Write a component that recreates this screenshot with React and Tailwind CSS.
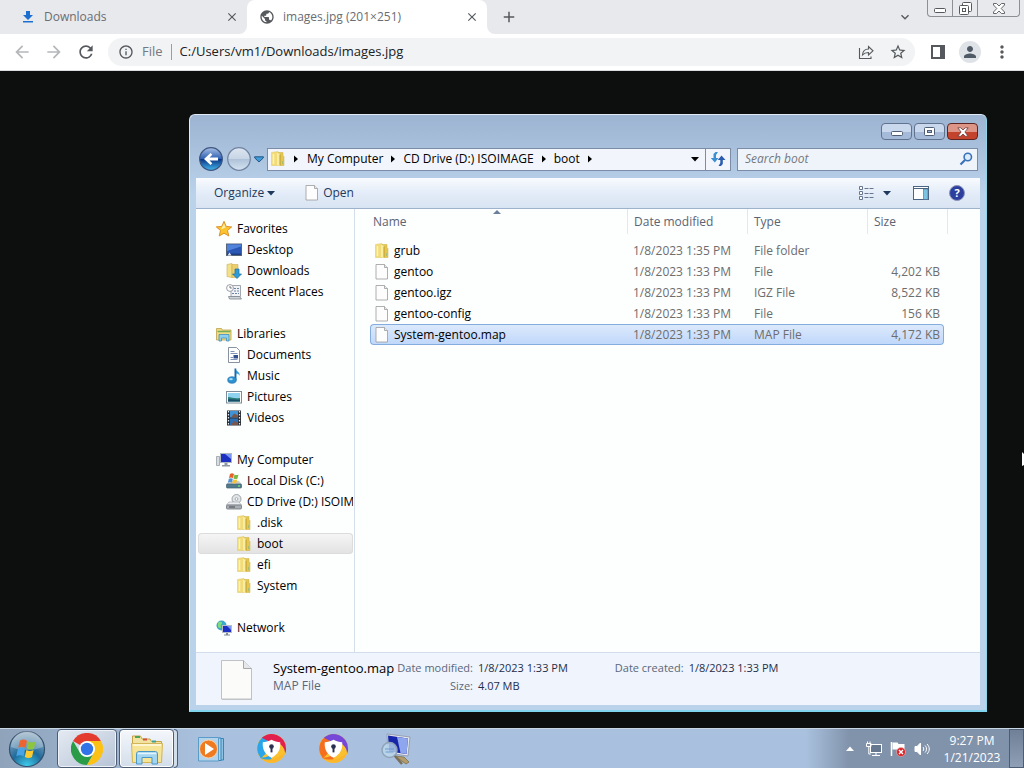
import React, { useState } from 'react'
import clsx from 'clsx'
import {
  MdAdd,
  MdArrowBack,
  MdArrowForward,
  MdClose,
  MdExpandMore,
  MdInfoOutline,
  MdMoreVert,
  MdPerson,
  MdPublic,
  MdRefresh,
  MdStarBorder
} from 'react-icons/md'

/* ---------- Small icons ---------- */

const Icon = ({ children, className = 'size-4', box = '0 0 16 16' }) => (
  <svg viewBox={box} className={clsx('shrink-0', className)} aria-hidden="true">
    {children}
  </svg>
)

const FolderIcon = () => (
  <Icon>
    <path d="M1.500 1.500L8 .5v14H1.500z" fill="#f2dc78" stroke="#e0c565" strokeWidth=".5" />
    <path d="M8 1.500h5v3l1 1v9H8z" fill="#e4c751" stroke="#cfae42" strokeWidth=".5" />
    <path d="M7 1.500l3 1.500v12.500L7 14z" fill="#f9eda4" />
    <path d="M10 3.500v11" stroke="#bd992f" />
    <path d="M3.500 3v10" stroke="#fcf3bd" strokeWidth="1.500" />
    <path d="M12.500 10v3" stroke="#a9bd6a" />
  </Icon>
)

const FileIcon = ({ className = 'size-4' }) => (
  <Icon className={className}>
    <path d="M2 .5h8.500l3 3v11.500H2z" fill="#fdfdfd" stroke="#9a9a9a" strokeWidth=".8" />
    <path d="M10.500.500v3h3" fill="#ececec" stroke="#9a9a9a" strokeWidth=".8" />
  </Icon>
)

const StarIcon = () => (
  <Icon>
    <path
      d="M8 .3l2.200 5.100 5.500.5-4.200 3.600 1.300 5.500L8 12.200 3.200 15l1.300-5.500L.3 5.900l5.500-.5z"
      fill="#fbc42f"
      stroke="#d98a1e"
      strokeWidth=".9"
    />
    <path d="M8 2.500l1.500 4L5 8.500z" fill="#fff0a8" />
  </Icon>
)

const DesktopIcon = () => (
  <Icon>
    <rect x=".5" y="2" width="15" height="11.500" fill="#2a56b4" stroke="#56657a" />
    <path d="M1 2.500h14v2L1 9z" fill="#4f83dc" />
    <path d="M1 11.500h14V13H1z" fill="#1c3d80" />
    <path d="M1.500 13.500l2-3 2 3z" fill="#dfe8f4" />
  </Icon>
)

const DownloadsIcon = () => (
  <Icon>
    <path d="M1 1.500l5-1v14l-5-1z" fill="#f3e08a" stroke="#cfae4c" strokeWidth=".6" />
    <path d="M6 1.500h6v13H6z" fill="#ecd070" stroke="#cfae4c" strokeWidth=".6" />
    <path d="M9 6h4v5h2.500L11 15.500 6.500 11H9z" fill="#2e9bd6" stroke="#1b6da3" strokeWidth=".7" />
  </Icon>
)

const RecentIcon = () => (
  <Icon>
    <path d="M5 1.500h9.500v11H5z" fill="#f0f2f5" stroke="#8c939c" strokeWidth=".8" />
    <path d="M2.500 12.500h11l2 2.500h-12z" fill="#cfd4da" stroke="#7e858e" strokeWidth=".8" />
    <path d="M8 4.500h5M8 7h5M6 9.500h7" stroke="#6f85a5" strokeWidth="1.200" strokeDasharray="2 1" />
    <circle cx="4" cy="4" r="3.400" fill="#fff" stroke="#8c939c" strokeWidth=".9" />
    <path d="M4 2v2h1.800" fill="none" stroke="#555" strokeWidth=".8" />
  </Icon>
)

const LibrariesIcon = () => (
  <Icon>
    <path d="M.5 2.500h5l1 1.500h8.500v10H.5z" fill="#f0dc84" stroke="#bfa14a" strokeWidth=".8" />
    <path d="M1.500 5.500h13" stroke="#6fae5a" strokeWidth="1.500" />
    <path d="M3 8.500h10V15h-2.500v-3h-5v3H3z" fill="#8fd0ef" stroke="#3f8fbd" strokeWidth=".8" />
  </Icon>
)

const DocumentsIcon = () => (
  <Icon>
    <path d="M2.500.500h8l3 3v12h-11z" fill="#fff" stroke="#7c8794" strokeWidth=".9" />
    <path d="M4.500 4.500h4M4.500 6.500h7M4.500 12.500h7M4.500 10.500h2.500" stroke="#7f94b8" />
    <path d="M7.500 8h4.500v3.500H7.500z" fill="#33518c" />
  </Icon>
)

const MusicIcon = () => (
  <Icon>
    <path d="M9 .5c1 3 5.500 3 4.500 7.500-.5-2-2-2.500-3.200-2.600V12z" fill="#3a9edb" />
    <path d="M8.500.500h1.800v12H8.500z" fill="#1d6aa8" />
    <ellipse cx="6" cy="12" rx="4.300" ry="3.300" fill="#2d92d2" stroke="#1d6aa8" strokeWidth=".6" />
    <ellipse cx="5" cy="11.200" rx="1.800" ry="1.100" fill="#a6dcf7" />
  </Icon>
)

const PicturesIcon = () => (
  <Icon>
    <rect x=".5" y="2.500" width="15" height="11.500" fill="#fff" stroke="#7f8c99" />
    <rect x="2" y="4" width="12" height="8.500" fill="#8fd3ef" />
    <path d="M2 8c4 0 6 2 12 1v3.500H2z" fill="#2b7f7d" />
    <path d="M2 10.500c4-1 8 1 12 0v2H2z" fill="#184e68" />
  </Icon>
)

const VideosIcon = () => (
  <Icon>
    <rect x="1" y=".5" width="14" height="15" fill="#2a2f36" />
    <rect x="4" y="1" width="8" height="6.500" fill="#3f93d8" />
    <rect x="4" y="8.500" width="8" height="6.500" fill="#2c6fb5" />
    <path d="M5 7.500l3-4 4 2v2zM5 15l3-4 4 2v2z" fill="#7d5548" />
    <path d="M2.500 1v14M13.500 1v14" stroke="#e8edf2" strokeWidth="1.200" strokeDasharray="1.500 1.500" />
  </Icon>
)

const ComputerIcon = () => (
  <Icon>
    <path d="M.5 4.500h3v9h-3z" fill="#d9dde2" stroke="#8a929c" strokeWidth=".7" />
    <rect x="4.500" y="1.500" width="11" height="9" fill="#1b2fc0" stroke="#aeb6c2" />
    <path d="M9 2h6v5z" fill="#7d96f0" />
    <path d="M8.500 11h3v2h-3zM6 13h8v1.500H6z" fill="#8d97a5" />
  </Icon>
)

const LocalDiskIcon = () => (
  <Icon>
    <path d="M3 8h10l2.500 3H.5z" fill="#c8ced6" />
    <rect x=".5" y="11" width="15" height="4" rx=".8" fill="#507a8e" stroke="#43606f" strokeWidth=".7" />
    <circle cx="13" cy="13" r=".9" fill="#6bea6b" />
    <path d="M4 1c1.500-1 2.500-1 4 0L7 5c-1.500-.8-2.500-.8-4 0z" fill="#e8622c" />
    <path d="M8.500 1.500c1.500.8 2.500.8 4 0l-1 4c-1.500.8-2.500.8-4 0z" fill="#7cb944" />
    <path d="M2.800 5.800c1.500-.8 2.500-.8 4 0L6 9.500c-1.500-.8-2.500-.8-4 0z" fill="#4f93d8" />
    <path d="M7.300 6.200c1.500.8 2.500.8 4 0l-1 3.700c-1.500.8-2.500.8-4 0z" fill="#f7c430" />
  </Icon>
)

const CdDriveIcon = () => (
  <Icon>
    <circle cx="10.500" cy="5" r="4.500" fill="#e2e5e9" stroke="#8b9096" strokeWidth=".8" />
    <circle cx="10.500" cy="5" r="1.400" fill="#fff" stroke="#8b9096" strokeWidth=".7" />
    <path d="M3 8h10l2.500 3H.5z" fill="#eceef1" stroke="#9aa0a8" strokeWidth=".6" />
    <rect x=".5" y="11" width="15" height="4" rx="1" fill="#a9aeb5" stroke="#70757c" strokeWidth=".8" />
    <path d="M3 13h6" stroke="#44484d" />
  </Icon>
)

const NetworkIcon = () => (
  <Icon>
    <circle cx="5.500" cy="5.500" r="5" fill="#3ba7c9" />
    <path d="M2 3c2-2 4-1 4 0s-2 2-1 4-2 1-3 0z" fill="#7fdc7a" />
    <rect x="6.500" y="5.500" width="9" height="7" fill="#1c2fc4" stroke="#b4bcc8" />
    <path d="M11 6h4v4z" fill="#7d96f0" />
    <path d="M10 13h2v1.500h-2zM8 14.500h6v1H8z" fill="#7f8997" />
  </Icon>
)

const Caret = ({ dir = 'right', className = 'text-black' }) => (
  <svg
    viewBox="0 0 8 8"
    className={clsx('size-2 shrink-0', className)}
    fill="currentColor"
    aria-hidden="true"
  >
    {dir === 'right' ? <path d="M2 .5L6 4 2 7.500z" /> : <path d="M0 2h8L4 6.500z" />}
  </svg>
)

/* ---------- Browser ---------- */

const DownloadArrow = () => (
  <Icon className="size-4">
    <path d="M6 2h4v4h3L8 11 3 6h3z" fill="#1a6fd0" />
    <path d="M3 12h10v1.500H3z" fill="#1a6fd0" />
  </Icon>
)

const BrowserTab = ({ title, icon, active }) => (
  <div
    className={clsx(
      'relative flex items-center pr-2 text-xs text-[#6a6d71]',
      active ? 'w-60 rounded-t-lg bg-white pl-3' : 'w-[247px] pl-5'
    )}
  >
    {active && (
      <>
        <svg viewBox="0 0 8 8" className="absolute bottom-0 -left-2 size-2" aria-hidden="true">
          <path d="M8 0v8H0a8 8 0 0 0 8-8z" fill="#fff" />
        </svg>
        <svg viewBox="0 0 8 8" className="absolute -right-2 bottom-0 size-2" aria-hidden="true">
          <path d="M0 0v8h8a8 8 0 0 1-8-8z" fill="#fff" />
        </svg>
      </>
    )}
    {icon}
    <span className="ml-2 flex-1 truncate">{title}</span>
    <button aria-label={`Close ${title}`} className="text-[#55585c]">
      <MdClose className="size-[14px]" />
    </button>
  </div>
)

const BrowserWindowButtons = () => (
  <div className="mr-1 flex h-[17px] rounded-b border border-t-0 border-[#8c8f94] text-[#55585c]">
    <button aria-label="Minimize browser" className="flex w-[25px] items-end justify-center border-r border-[#8c8f94] pb-[3px]">
      <svg viewBox="0 0 12 5" className="h-[5px] w-3" fill="#fff" stroke="currentColor">
        <rect x=".5" y=".5" width="11" height="4" rx="1" />
      </svg>
    </button>
    <button aria-label="Restore browser" className="flex w-[25px] items-center justify-center border-r border-[#8c8f94]">
      <svg viewBox="0 0 13 13" className="size-[13px]" fill="#fff" stroke="currentColor">
        <rect x="3.500" y=".5" width="9" height="9" rx="1" />
        <rect x=".5" y="3.500" width="9" height="9" rx="1" />
        <rect x="3.500" y="6.500" width="3" height="3" />
      </svg>
    </button>
    <button aria-label="Close browser" className="flex w-[41px] items-center justify-center">
      <svg viewBox="0 0 12 11" className="h-[11px] w-3" fill="#fff" stroke="currentColor" strokeWidth=".9">
        <path d="M.5.500h3L6 3 8.500.500h3v1.500L8.200 5.500l3.300 3.500v1.500h-3L6 8l-2.500 2.500h-3V9l3.300-3.500L.5 2z" />
      </svg>
    </button>
  </div>
)

const BrowserHeader = () => {
  const [url, setUrl] = useState('C:/Users/vm1/Downloads/images.jpg')

  return (
    <header className="border-b border-[#dadce0] bg-white">
      <div className="flex h-[34px] bg-[#e8e9ed]">
        <BrowserTab title="Downloads" icon={<DownloadArrow />} />
        <BrowserTab
          title="images.jpg (201×251)"
          icon={<MdPublic className="size-4 text-[#55585c]" />}
          active
        />
        <button aria-label="New tab" className="ml-[13px] text-[#55585c]">
          <MdAdd className="size-[18px]" />
        </button>
        <button aria-label="Search tabs" className="mr-[14px] ml-auto text-[#55585c]">
          <MdExpandMore className="size-4" />
        </button>
        <BrowserWindowButtons />
      </div>

      <div className="flex h-9 items-center px-3">
        <button aria-label="Back" className="mr-3 text-[#b5b7ba]">
          <MdArrowBack className="size-5" />
        </button>
        <button aria-label="Forward" className="mr-3 text-[#b5b7ba]">
          <MdArrowForward className="size-5" />
        </button>
        <button aria-label="Reload" className="mr-3 text-[#55585c]">
          <MdRefresh className="size-5" />
        </button>

        <div className="flex h-7 flex-1 items-center rounded-full bg-[#f1f3f4] pr-2 pl-[10px] text-[13px]">
          <MdInfoOutline className="size-4 text-[#55585c]" />
          <span className="ml-2 text-[#75787c]">File</span>
          <span className="mx-2 h-4 w-px bg-[#9a9da1]" />
          <input
            aria-label="Address"
            value={url}
            onChange={(e) => setUrl(e.target.value)}
            className="min-w-0 flex-1 bg-transparent text-[#202124] outline-none"
          />
          <button aria-label="Share" className="mr-[15px]">
            <svg viewBox="0 0 16 16" className="size-4" fill="none" stroke="#55585c" strokeWidth="1.100">
              <path d="M1.500 4v10.500H13V12.500" />
              <path d="M4.500 11c.3-4 2.500-6 6-6V2.500L15 6.800 10.500 11V8.500c-2.800 0-4.500.8-6 2.500z" />
            </svg>
          </button>
          <button aria-label="Bookmark" className="text-[#55585c]">
            <MdStarBorder className="size-[18px]" />
          </button>
        </div>

        <button aria-label="Side panel" className="ml-4">
          <svg viewBox="0 0 14 14" className="size-[14px]">
            <path d="M0 0h14v14H0z" fill="#55585c" />
            <path d="M2 2h7v10H2z" fill="#fff" />
          </svg>
        </button>
        <button
          aria-label="Profile"
          className="ml-[14px] flex size-[22px] items-center justify-center rounded-full bg-[#dfe3e8] text-[#4f5a66]"
        >
          <MdPerson className="size-[18px]" />
        </button>
        <button aria-label="Menu" className="ml-[11px] text-[#55585c]">
          <MdMoreVert className="size-5" />
        </button>
      </div>
    </header>
  )
}

/* ---------- Explorer window ---------- */

const navGroups = [
  [
    { name: 'Favorites', icon: StarIcon, level: 0 },
    { name: 'Desktop', icon: DesktopIcon, level: 1 },
    { name: 'Downloads', icon: DownloadsIcon, level: 1 },
    { name: 'Recent Places', icon: RecentIcon, level: 1 }
  ],
  [
    { name: 'Libraries', icon: LibrariesIcon, level: 0 },
    { name: 'Documents', icon: DocumentsIcon, level: 1 },
    { name: 'Music', icon: MusicIcon, level: 1 },
    { name: 'Pictures', icon: PicturesIcon, level: 1 },
    { name: 'Videos', icon: VideosIcon, level: 1 }
  ],
  [
    { name: 'My Computer', icon: ComputerIcon, level: 0 },
    { name: 'Local Disk (C:)', icon: LocalDiskIcon, level: 1 },
    { name: 'CD Drive (D:) ISOIMAGE', icon: CdDriveIcon, level: 1 },
    { name: '.disk', icon: FolderIcon, level: 2 },
    { name: 'boot', icon: FolderIcon, level: 2 },
    { name: 'efi', icon: FolderIcon, level: 2 },
    { name: 'System', icon: FolderIcon, level: 2 }
  ],
  [{ name: 'Network', icon: NetworkIcon, level: 0 }]
]

const files = [
  { name: 'grub', date: '1/8/2023 1:35 PM', type: 'File folder', size: '', folder: true },
  { name: 'gentoo', date: '1/8/2023 1:33 PM', type: 'File', size: '4,202 KB' },
  { name: 'gentoo.igz', date: '1/8/2023 1:33 PM', type: 'IGZ File', size: '8,522 KB' },
  { name: 'gentoo-config', date: '1/8/2023 1:33 PM', type: 'File', size: '156 KB' },
  { name: 'System-gentoo.map', date: '1/8/2023 1:33 PM', type: 'MAP File', size: '4,172 KB' }
]

const indent = ['pl-[18px]', 'pl-7', 'pl-[38px]']

const CaptionButtons = () => (
  <div className="flex h-8 items-start justify-end gap-0.5 pt-2 pr-0.5">
    <button
      aria-label="Minimize"
      className="flex h-[17px] w-[31px] items-center justify-center rounded-sm border border-[#61728e] bg-linear-to-b from-[#c9d8ec] from-50% to-[#a5bad8] to-50% pt-1"
    >
      <svg viewBox="0 0 12 5" className="h-[5px] w-3" fill="#fff" stroke="#4f5d75">
        <rect x=".5" y=".5" width="11" height="4" rx="1" />
      </svg>
    </button>
    <button
      aria-label="Maximize"
      className="flex h-[17px] w-[31px] items-center justify-center rounded-sm border border-[#61728e] bg-linear-to-b from-[#c9d8ec] from-50% to-[#a5bad8] to-50%"
    >
      <svg viewBox="0 0 11 9" className="h-[9px] w-[11px]" fill="#fff" stroke="#4f5d75">
        <rect x=".5" y=".5" width="10" height="8" rx="1" />
        <rect x="3.500" y="3.500" width="4" height="2" fill="#a5bad8" />
      </svg>
    </button>
    <button
      aria-label="Close"
      className="flex h-[17px] w-[31px] items-center justify-center rounded-sm border border-[#5e2520] bg-linear-to-b from-[#dd9587] from-50% to-[#c4432c] to-50%"
    >
      <svg viewBox="0 0 12 10" className="h-[10px] w-3" fill="#fff" stroke="#6b3a38" strokeWidth=".8">
        <path d="M.8.800h3L6 3 8.200.800h3L7.900 5l3.300 4.200h-3L6 7 3.800 9.200h-3L4.100 5z" />
      </svg>
    </button>
  </div>
)

const NavigationRow = () => {
  const crumbs = ['My Computer', 'CD Drive (D:) ISOIMAGE', 'boot']

  return (
    <div className="mb-[7px] flex h-6 items-center pr-0.5 pl-[3px]">
      <button aria-label="Back" className="mr-1">
        <svg viewBox="0 0 24 24" className="size-6">
          <defs>
            <linearGradient id="backFill" x1="0" y1="0" x2="0" y2="1">
              <stop offset="0" stopColor="#a9bfe3" />
              <stop offset=".48" stopColor="#2f62b4" />
              <stop offset=".52" stopColor="#0b3685" />
              <stop offset="1" stopColor="#42b6ee" />
            </linearGradient>
          </defs>
          <circle cx="12" cy="12" r="11.300" fill="url(#backFill)" stroke="#3d5680" strokeWidth="1.200" />
          <path d="M5 12l6.500-6 1.800 1.800L10.500 10.500H19v3h-8.500l2.800 2.700L11.500 18z" fill="#fff" />
        </svg>
      </button>
      <button aria-label="Forward" className="mr-[3px]">
        <svg viewBox="0 0 24 24" className="size-6">
          <defs>
            <linearGradient id="forwardFill" x1="0" y1="0" x2="0" y2="1">
              <stop offset="0" stopColor="#dde6f1" />
              <stop offset=".48" stopColor="#c8d5e5" />
              <stop offset=".52" stopColor="#afc2d8" />
              <stop offset="1" stopColor="#d5e4f3" />
            </linearGradient>
          </defs>
          <circle cx="12" cy="12" r="11.300" fill="url(#forwardFill)" stroke="#6f83a0" strokeWidth="1.200" />
        </svg>
      </button>
      <button aria-label="Recent pages" className="mr-[3px]">
        <svg viewBox="0 0 10 7" className="h-[7px] w-[10px]">
          <path d="M.6.800h8.800v1L5 6 .6 1.800z" fill="#3f9ed8" stroke="#1d4a7c" strokeWidth=".9" />
        </svg>
      </button>

      <div className="flex h-[23px] flex-1 items-center border border-[#7a8ca6] bg-[#f2f6fc] pl-[2px] text-xs text-black">
        <FolderIcon />
        <Caret className="mr-[7px] ml-[6px] text-black" />
        {crumbs.map((crumb) => (
          <React.Fragment key={crumb}>
            <button className="whitespace-nowrap">{crumb}</button>
            <Caret className="mx-[6px] text-black" />
          </React.Fragment>
        ))}
        <button aria-label="Previous locations" className="mr-[6px] ml-auto">
          <Caret dir="down" />
        </button>
        <button
          aria-label="Refresh"
          className="flex h-full w-[25px] items-center justify-center border-l border-[#7a8ca6]"
        >
          <svg viewBox="0 0 16 16" className="size-4">
            <path d="M8 1H5.500L3.500 3v4H.8L4.800 11.500 8.500 7H6V4z" fill="#3b8fd0" />
            <path d="M8.500 15h2.500l1.800-2V9h2.700L11.500 4.500 7.800 9h2.500v3z" fill="#2a5cb0" />
          </svg>
        </button>
      </div>

      <div className="ml-[6px] flex h-[23px] w-[241px] items-center border border-[#7a8ca6] bg-[#eff4fb] pr-1 pl-[7px]">
        <input
          aria-label="Search boot"
          placeholder="Search boot"
          className="min-w-0 flex-1 bg-transparent text-xs italic outline-none placeholder:text-[#74777d]"
        />
        <svg viewBox="0 0 14 14" className="size-[14px]" fill="none" stroke="#3a72ba">
          <circle cx="8.800" cy="5" r="3.700" fill="#dcebfa" strokeWidth="1.600" />
          <path d="M6 8l-4.500 4.500" strokeWidth="2.200" />
        </svg>
      </div>
    </div>
  )
}

const CommandBar = () => (
  <div className="flex h-[31px] items-center border-b border-[#9fb2cd] bg-linear-to-b from-[#f9fbfe] via-[#e3ecf8] via-50% to-[#d9e4f3] pr-[15px] pl-[18px] text-xs text-[#1e395b]">
    <button className="flex items-center gap-[3px]">
      Organize
      <Caret dir="down" className="text-[#1e395b]" />
    </button>
    <button className="ml-[29px] flex items-center gap-[3px]">
      <FileIcon />
      Open
    </button>

    <button aria-label="Change view" className="ml-auto">
      <svg viewBox="0 0 16 14" className="h-[14px] w-4" fill="none" stroke="#66778f">
        <path d="M1.500.500h3v3h-3zM1.500 5.500h3v3h-3zM1.500 10.500h3v3h-3z" fill="#fff" />
        <path d="M6.500 2.500h9M6.500 7.500h9M6.500 11.500h9" strokeDasharray="4 1" />
      </svg>
    </button>
    <button aria-label="More view options" className="ml-[9px]">
      <Caret dir="down" className="text-[#1e395b]" />
    </button>
    <button aria-label="Preview pane" className="ml-[22px]">
      <svg viewBox="0 0 16 14" className="h-[14px] w-4">
        <rect x=".5" y=".5" width="15" height="13" fill="#fff" stroke="#4d6585" />
        <path d="M1 2.500h14" stroke="#4d6585" />
        <rect x="10.500" y="3" width="4.500" height="10.500" fill="#7cc3e2" stroke="#4d6585" strokeWidth=".6" />
      </svg>
    </button>
    <button
      aria-label="Help"
      className="ml-5 flex size-4 items-center justify-center rounded-full border border-[#8d96b8] bg-[#2c3f9e] text-[11px] font-bold text-white"
    >
      ?
    </button>
  </div>
)

const NavigationPane = ({ selected, onSelect }) => (
  <nav className="w-[159px] shrink-0 border-r border-[#d5dfec] pt-[9px] text-xs text-black">
    {navGroups.map((group) => (
      <ul key={group[0].name} className="mb-[21px] last:mb-0">
        {group.map(({ name, icon: ItemIcon, level }) => (
          <li key={name} className="pr-px pl-0.5">
            <button
              onClick={() => onSelect(name)}
              className={clsx(
                'flex h-[21px] w-full items-center gap-[5px] overflow-hidden text-left whitespace-nowrap',
                indent[level],
                selected === name &&
                  'rounded-sm bg-linear-to-b from-[#f6f6f6] to-[#e2e2e2] ring-1 ring-[#dcdcdc] ring-inset'
              )}
            >
              <ItemIcon />
              {name}
            </button>
          </li>
        ))}
      </ul>
    ))}
  </nav>
)

const headCell = 'h-[25px] border-r border-[#e3e8ee] pl-[6px] text-left font-normal'

const FileTable = ({ selected, onSelect }) => (
  <div className="flex-1 overflow-hidden pl-[15px]">
    <table className="w-[578px] table-fixed border-separate border-spacing-0 text-xs text-[#6d6d6d]">
      <colgroup>
        <col className="w-[258px]" />
        <col className="w-[120px]" />
        <col className="w-[120px]" />
        <col className="w-[76px]" />
        <col className="w-1" />
      </colgroup>
      <thead className="text-[#5a6473]">
        <tr>
          <th className="relative h-[25px] border-r border-[#e3e8ee] pl-[3px] text-left font-normal">
            Name
            <svg viewBox="0 0 8 4" className="absolute top-px left-[123px] h-1 w-2" aria-hidden="true">
              <path d="M0 4l4-4 4 4z" fill="#6a7f9c" />
            </svg>
          </th>
          <th className={headCell}>Date modified</th>
          <th className={headCell}>Type</th>
          <th className={headCell} colSpan={2}>
            Size
          </th>
        </tr>
        <tr aria-hidden="true">
          <td className="h-[6px]" colSpan={5} />
        </tr>
      </thead>
      <tbody>
        {files.map((file) => {
          const isSelected = selected === file.name
          const cell = clsx(
            'h-[21px] border-y',
            isSelected
              ? 'border-[#84acdd] bg-linear-to-b from-[#dce9fc] to-[#c0d8fb]'
              : 'border-transparent'
          )

          return (
            <tr key={file.name} onClick={() => onSelect(file.name)} aria-selected={isSelected}>
              <td className={clsx(cell, 'rounded-l-sm border-l pl-[3px] text-black')}>
                <span className="flex items-center gap-1">
                  {file.folder ? <FolderIcon /> : <FileIcon />}
                  {file.name}
                </span>
              </td>
              <td className={clsx(cell, 'pl-[5px] whitespace-nowrap')}>{file.date}</td>
              <td className={clsx(cell, 'pl-[6px]')}>{file.type}</td>
              <td className={clsx(cell, 'rounded-r-sm border-r pr-[3px] text-right whitespace-nowrap')}>
                {file.size}
              </td>
              <td />
            </tr>
          )
        })}
      </tbody>
    </table>
  </div>
)

const DetailsPane = () => (
  <footer className="flex border-t border-[#d3dcea] bg-[#f0f4fd] pt-[5px] pb-[5px] pl-[25px] text-xs leading-[18px] text-[#5a6779]">
    <svg viewBox="0 0 32 42" className="h-[42px] w-8 shrink-0" aria-hidden="true">
      <path d="M1 3h22l8 8v31H1z" fill="#bfc2c8" />
      <path d="M.5 2.500h22l8 8v30.500H.5z" fill="#fbfbfa" stroke="#c0c1c4" />
      <path d="M22.500 2.500v8h8" fill="#e6e7e9" stroke="#a6a8ac" />
    </svg>
    <div className="ml-5 w-[123px] pt-px">
      <div className="text-[13px] whitespace-nowrap text-black">System-gentoo.map</div>
      <div>MAP File</div>
    </div>
    <dl className="grid grid-cols-[77px_auto] content-start gap-x-[5px] pt-px text-[11px]">
      <dt className="text-right">Date modified:</dt>
      <dd className="text-[#1e2f4a]">1/8/2023 1:33 PM</dd>
      <dt className="text-right">Size:</dt>
      <dd className="text-[#1e2f4a]">4.07 MB</dd>
    </dl>
    <dl className="ml-[47px] flex gap-[5px] pt-px text-[11px]">
      <dt>Date created:</dt>
      <dd className="text-[#1e2f4a]">1/8/2023 1:33 PM</dd>
    </dl>
  </footer>
)

const ExplorerWindow = () => {
  const [folder, setFolder] = useState('boot')
  const [file, setFile] = useState('System-gentoo.map')

  return (
    <section className="flex min-w-0 flex-1 flex-col rounded-t-md border border-b-2 border-[#dfeaf6] border-r-[#8fd6ea] border-b-[#7fd4ee] bg-linear-to-b from-[#9db4d2] to-[#bbd2eb] to-[80px] px-[6px] pb-[5px]">
      <CaptionButtons />
      <NavigationRow />
      <CommandBar />
      <div className="flex flex-1 bg-[#fdfefe]">
        <NavigationPane selected={folder} onSelect={setFolder} />
        <FileTable selected={file} onSelect={setFile} />
      </div>
      <DetailsPane />
    </section>
  )
}

/* ---------- Taskbar ---------- */

const StartOrb = () => (
  <svg viewBox="0 0 38 38" className="size-[38px]" aria-hidden="true">
    <defs>
      <radialGradient id="orbFill" cx=".5" cy="1" r="1">
        <stop offset="0" stopColor="#3fd0ee" />
        <stop offset=".45" stopColor="#1f6b9c" />
        <stop offset="1" stopColor="#9fb4c6" />
      </radialGradient>
    </defs>
    <circle cx="19" cy="19" r="17.500" fill="url(#orbFill)" stroke="#33506c" strokeWidth="1.200" />
    <path d="M3 17a16 16 0 0 1 32 0c-9 4-23 4-32 0z" fill="#fff" opacity=".28" />
    <path d="M12 10.500c2.500-1.300 4.500-1.200 7 .2l-1.500 7c-2.500-1.300-4.700-1.300-7.200-.1z" fill="#ec6432" />
    <path d="M20.300 11.400c2.500 1.300 4.700 1.300 7.200.1L26 18.700c-2.500 1.300-4.700 1.200-7.200-.2z" fill="#8cc63f" />
    <path d="M9.900 19c2.500-1.200 4.700-1.200 7.200.1l-1.600 7.100c-2.500-1.400-4.700-1.400-7.200-.1z" fill="#48a4e6" />
    <path d="M18.400 19.900c2.500 1.400 4.700 1.400 7.200.1L24 27.100c-2.500 1.300-4.700 1.200-7.200-.1z" fill="#fdcb2f" />
  </svg>
)

const ChromeIcon = () => (
  <svg viewBox="0 0 32 32" className="size-8" aria-hidden="true">
    <path d="M16 16L2.100 8A16 16 0 0 1 29.900 8z" fill="#e33b2e" />
    <path d="M9.100 20L2.100 8A16 16 0 0 0 16 32l6.900-12z" fill="#2a9c48" />
    <path d="M16 8h13.900A16 16 0 0 1 16 32l6.900-12z" fill="#fbc116" />
    <circle cx="16" cy="16" r="8" fill="#fff" />
    <circle cx="16" cy="16" r="6.200" fill="#3273e8" />
  </svg>
)

const ExplorerIcon = () => (
  <svg viewBox="0 0 34 32" className="h-8 w-[34px]" aria-hidden="true">
    <path d="M2.500 3h8l1.500 3h8l1.500 2.500h10V28h-29z" fill="#f3e3a0" stroke="#c3a345" />
    <path d="M5 4h5" stroke="#4fa458" strokeWidth="2" />
    <path d="M13 6.500h4" stroke="#d3503c" strokeWidth="2" />
    <path d="M22 8.500h4" stroke="#3f9f95" strokeWidth="2" />
    <path d="M1.500 10.500h31l-1 19h-29z" fill="#f6e596" stroke="#d3b65a" />
    <path d="M3 12h28" stroke="#fdf6d0" strokeWidth="2" />
    <path d="M6.500 20.500c0-1 1-2 2-2h17c1 0 2 1 2 2V31h-5.500v-6.500H12V31H6.500z" fill="#a4d5f0" stroke="#4b96c5" />
    <path d="M8 20.500h18" stroke="#e3f4fd" strokeWidth="1.500" />
  </svg>
)

const MediaPlayerIcon = () => (
  <svg viewBox="0 0 28 28" className="size-7" aria-hidden="true">
    <path d="M8 3.500h18.500v21.500H8z" fill="#8cc4e8" stroke="#3a83b5" />
    <path d="M5 3h19v22.500H5z" fill="#a9d4ee" stroke="#3a83b5" />
    <path d="M1.500 2.500h20v23.500h-20z" fill="#b3d3ec" stroke="#5a9cc8" />
    <circle cx="11.500" cy="14" r="9" fill="#ee7b22" stroke="#fbd0a4" />
    <path d="M8 8l9 6-9 6z" fill="#fff" />
  </svg>
)

const ShieldBrowserIcon = ({ left, top }) => (
  <svg viewBox="0 0 32 32" className="size-[31px]" aria-hidden="true">
    <circle cx="16" cy="16" r="15" fill="#fbc02d" />
    <path d="M16 16L5 26A15 15 0 0 1 9 3z" fill={left} />
    <path d="M6 5A15 15 0 0 1 31 16c0 2 0 3-1 5 0-7-7-13-16-12z" fill={top} />
    <path d="M4 25c4 1 9 0 12-4l0 6c-3 2-8 2-12-2z" fill={left} />
    <path d="M5 26c7 3 18 1 25-6A15 15 0 0 1 5 26z" fill="#fbb62c" />
    <path d="M16 7c3 1.800 6 2.200 9 2.500.6 7-2 12.500-9 16C9 22 6.400 16.500 7 9.500c3-.3 6-.7 9-2.500z" fill="#fff" />
    <circle cx="16" cy="14" r="2.400" fill="#2b3150" />
    <path d="M15 14h2v6h-2z" fill="#2b3150" />
  </svg>
)

const InspectorIcon = () => (
  <svg viewBox="0 0 32 32" className="size-8" aria-hidden="true">
    <path d="M7 1l23 3-2 19-20-3z" fill="#e4e7ee" stroke="#8b92a3" strokeWidth=".8" />
    <path d="M8 2.500l20 3-1.500 15.500L9 18.500z" fill="#1726a8" />
    <path d="M17 4l11 1.500-1.500 15.500-6-1z" fill="#8ea6ee" />
    <path d="M14 23l10 1 5 5-3 2-7-5z" fill="#b39c69" stroke="#6c5c38" strokeWidth=".6" />
    <circle cx="9.500" cy="17" r="7.500" fill="#bcd8ee" fillOpacity=".8" stroke="#8fa3b8" strokeWidth="1.500" />
    <path d="M5 16h9M5.500 19h8" stroke="#6f9ccc" />
    <path d="M15 23l7 8" stroke="#7a6f58" strokeWidth="2.500" />
  </svg>
)

const TrayIcons = () => (
  <>
    <button aria-label="Network status">
      <svg viewBox="0 0 16 16" className="size-4">
        <rect x="4.500" y="3.500" width="11" height="8" fill="#66788f" stroke="#fff" />
        <path d="M6 14.500h8M10 12v2" stroke="#fff" />
        <path d="M.5 2.500h4.500v3H.5zM1.500.500v2M4 .5v2M2.800 6v7h2" fill="none" stroke="#fff" />
      </svg>
    </button>
    <button aria-label="Action center">
      <svg viewBox="0 0 16 16" className="size-4">
        <path d="M1.500 1v14" stroke="#fff" strokeWidth="1.500" />
        <path d="M2.500 1.500h5l1 1.500h6v7h-6l-1-1.500h-5z" fill="#fff" />
        <circle cx="11" cy="11" r="4.500" fill="#d7262b" stroke="#f2b9b9" strokeWidth=".6" />
        <path d="M9 9l4 4M13 9l-4 4" stroke="#fff" strokeWidth="1.400" />
      </svg>
    </button>
    <button aria-label="Volume">
      <svg viewBox="0 0 16 16" className="size-4" fill="none" stroke="#fff">
        <path d="M1 5.500h2L6.500 2v12L3 10.500H1z" fill="#fff" />
        <path d="M9 6c1 1 1 3 0 4M11 4.500c2 2 2 5 0 7M13 3c3 3 3 7 0 10" />
      </svg>
    </button>
  </>
)

const Taskbar = () => (
  <div className="flex h-10 items-stretch border-t border-[#c9d6e4] bg-linear-to-r from-[#8fa3bb] via-[#a9c1de] via-20% to-[#a9c1de] text-white">
    <button aria-label="Start" className="flex w-[57px] items-center pl-2">
      <StartOrb />
    </button>
    <button
      aria-label="Chrome"
      className="flex w-[60px] items-center justify-center rounded border border-[#4c5d75] bg-linear-to-br from-[#e4eaf2] to-[#b7c4d6] ring-1 ring-[#edf2f8] ring-inset"
    >
      <ChromeIcon />
    </button>
    <button
      aria-label="Explorer"
      className="ml-0.5 flex w-[55px] items-center justify-center rounded border border-[#4c5d75] bg-linear-to-b from-[#f4f7fb] to-[#d3deeb] ring-1 ring-white ring-inset"
    >
      <ExplorerIcon />
    </button>
    <span className="w-1 rounded-r border border-l-0 border-[#4c5d75] bg-[#d3deeb]" />

    <div className="ml-[19px] flex items-center gap-[31px]">
      <button aria-label="Media player">
        <MediaPlayerIcon />
      </button>
      <button aria-label="Secure browser">
        <ShieldBrowserIcon left="#2aa5ea" top="#e0204f" />
      </button>
      <button aria-label="Private browser">
        <ShieldBrowserIcon left="#f4701f" top="#7548d8" />
      </button>
      <button aria-label="System inspector">
        <InspectorIcon />
      </button>
    </div>

    <div className="ml-auto flex items-center gap-2 bg-linear-to-r from-transparent to-[#8193ab] to-20% pl-10">
      <button aria-label="Show hidden icons" className="mr-1">
        <svg viewBox="0 0 8 5" className="h-[5px] w-2">
          <path d="M0 5l4-4.500L8 5z" fill="#fff" />
        </svg>
      </button>
      <TrayIcons />
      <div className="ml-1 w-[60px] text-center text-xs leading-[17px]">
        <div>9:27 PM</div>
        <div>1/21/2023</div>
      </div>
      <button
        aria-label="Show desktop"
        className="-ml-px h-full w-[15px] border border-[#4d5d73] bg-linear-to-b from-[#6f8097] to-[#8fa0b6]"
      />
    </div>
  </div>
)

const App = () => (
  <div className="flex min-h-screen flex-col bg-[#0d0f0e] font-['Open_Sans','Noto_Sans',sans-serif]">
    <BrowserHeader />
    <main className="relative flex flex-1 pt-[43px] pr-[37px] pb-4 pl-[189px]">
      <ExplorerWindow />
      {/* Mouse pointer leaving the screen */}
      <svg viewBox="0 0 2 15" className="absolute top-[381px] right-0 h-[15px] w-0.5" aria-hidden="true">
        <path d="M0 0l2 2v11l-2 1z" fill="#fff" />
      </svg>
    </main>
    <Taskbar />
  </div>
)

export default App
